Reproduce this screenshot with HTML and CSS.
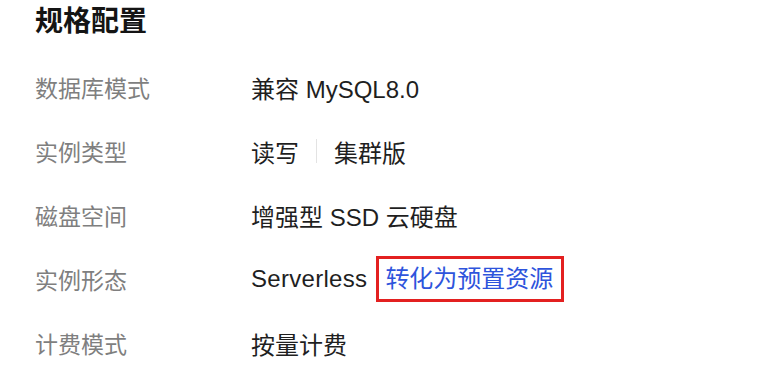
FILE: index.html
```html
<!DOCTYPE html>
<html lang="zh-CN">
  <head>
    <meta charset="UTF-8" />
    <meta name="viewport" content="width=device-width, initial-scale=1.0" />
    <title>规格配置</title>
    <link rel="stylesheet" href="styles.css">
  </head>
  <body>
    <section class="spec">
      <h2 class="spec__title">规格配置</h2>
      <div class="spec__list">
        <div class="spec__row">
          <div class="spec__label">数据库模式</div>
          <div class="spec__value">兼容 MySQL8.0</div>
        </div>
        <div class="spec__row">
          <div class="spec__label">实例类型</div>
          <div class="spec__value">
            <span>读写</span>
            <span class="spec__divider"></span>
            <span>集群版</span>
          </div>
        </div>
        <div class="spec__row">
          <div class="spec__label">磁盘空间</div>
          <div class="spec__value">增强型 SSD 云硬盘</div>
        </div>
        <div class="spec__row">
          <div class="spec__label">实例形态</div>
          <div class="spec__value">
            <span class="spec__latin">Serverless</span>
            <a class="spec__link" href="#">转化为预置资源</a>
          </div>
        </div>
        <div class="spec__row">
          <div class="spec__label">计费模式</div>
          <div class="spec__value">按量计费</div>
        </div>
      </div>
    </section>
  </body>
</html>
```

FILE: styles.css
```css
* {
  box-sizing: border-box;
}

body {
  margin: 0;
  background: #fff;
  font-family: 'Liberation Sans', 'Noto Sans CJK SC', sans-serif;
  color: #1f1f1f;
}

.spec {
  padding-left: 35px;
}

.spec__title {
  margin: 0;
  font-size: 28px;
  font-weight: 700;
  line-height: 44px;
  color: #141414;
}

.spec__list {
  padding-top: 11px;
}

.spec__row {
  display: flex;
  align-items: center;
  height: 64px;
}

.spec__label {
  width: 216px;
  flex-shrink: 0;
  font-size: 23px;
  color: #7f7f7f;
}

.spec__value {
  display: flex;
  align-items: center;
  font-size: 24px;
  color: #1f1f1f;
}

.spec__latin {
  letter-spacing: 0.3px;
}

.spec__divider {
  width: 1px;
  height: 24px;
  margin: 0 17px;
  background: #e3e3e3;
}

.spec__link {
  display: inline-block;
  margin-left: 9px;
  padding: 3px 8px 3px 6px;
  border: 3px solid #e32020;
  line-height: 34px;
  color: #2e54dc;
  text-decoration: none;
}
```
